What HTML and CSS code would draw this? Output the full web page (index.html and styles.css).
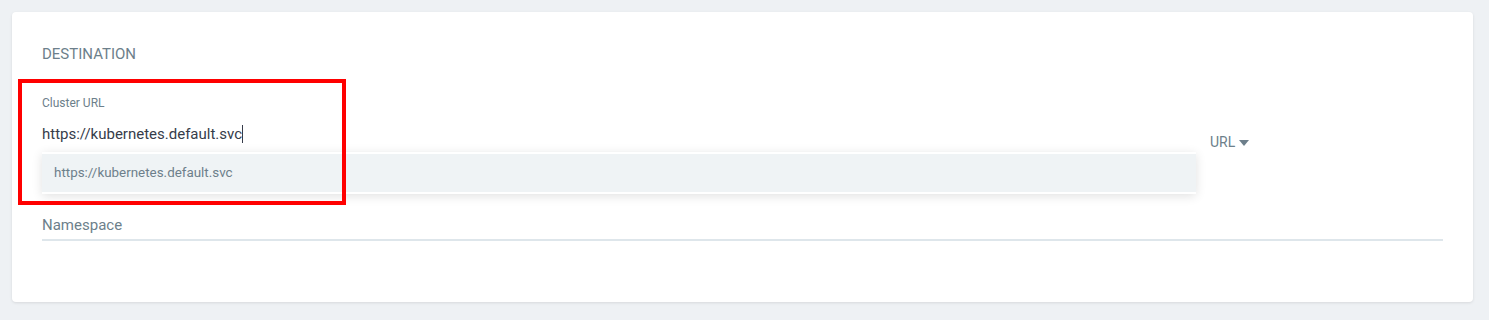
FILE: index.html
```html
<!DOCTYPE html>
<html lang="en">
<head>
<meta charset="UTF-8">
<meta name="viewport" content="width=device-width, initial-scale=1.0">
<title>Destination</title>
<link rel="stylesheet" href="styles.css">
</head>
<body>

<div class="card">
    <div class="section-title">DESTINATION</div>

    <div class="row">
        <div class="field">
            <div class="field-label">Cluster URL</div>
            <div class="field-value">https://kubernetes.default.svc<span class="cursor"></span></div>
            <div class="autocomplete">
                <div class="autocomplete-item">https://kubernetes.default.svc</div>
            </div>
            <div class="highlight"></div>
        </div>
        <div class="type-select">
            URL
            <svg class="caret" width="10" height="6" viewBox="0 0 10 6"><polygon points="0,0 10,0 5,6" fill="#6d7f8b"/></svg>
        </div>
    </div>

    <div class="field-plain">Namespace</div>
</div>

</body>
</html>
```

FILE: styles.css
```css
body {
    margin: 0;
    padding: 12px 16px 12px 12px;
    font-family: Roboto, "Liberation Sans", sans-serif;
    background-color: #eef1f4;
}
.card {
    background-color: #fff;
    border-radius: 4px;
    box-shadow: 0 1px 3px rgba(0, 0, 0, 0.1);
    padding: 30px;
}
.section-title {
    font-size: 15px;
    line-height: 20px;
    color: #6d7f8b;
    margin-top: 2px;
    margin-bottom: 32px;
}
.row {
    display: flex;
}
.field {
    position: relative;
    flex: 1;
}
.field-label {
    font-size: 12px;
    line-height: 14px;
    color: #6d7f8b;
}
.field-value {
    margin-top: 14px;
    font-size: 15px;
    line-height: 20px;
    color: #363c4a;
    height: 22px;
}
.cursor {
    display: inline-block;
    width: 1px;
    height: 18px;
    background-color: #363c4a;
    vertical-align: -4px;
}
.autocomplete {
    position: absolute;
    top: 56px;
    left: 0;
    right: 0;
    padding: 2px 0;
    background-color: #fff;
    box-shadow: 0 2px 10px rgba(0, 0, 0, 0.12);
    z-index: 2;
}
.autocomplete-item {
    background-color: #eff3f5;
    padding: 0 12px;
    height: 38px;
    line-height: 38px;
    font-size: 13.4px;
    color: #6d7f8b;
}
.highlight {
    position: absolute;
    left: -24px;
    top: -17px;
    width: 328px;
    height: 126px;
    box-sizing: border-box;
    border: 4px solid #ff0000;
    z-index: 3;
}
.type-select {
    width: 233px;
    margin-left: 14px;
    padding-top: 36px;
    font-size: 14px;
    line-height: 20px;
    color: #6d7f8b;
}
.caret {
    vertical-align: 1px;
}
.field-plain {
    margin-top: 63px;
    margin-bottom: 31px;
    font-size: 15px;
    line-height: 20px;
    color: #6d7f8b;
    padding-bottom: 4px;
    border-bottom: 2px solid #dee6eb;
}
```
